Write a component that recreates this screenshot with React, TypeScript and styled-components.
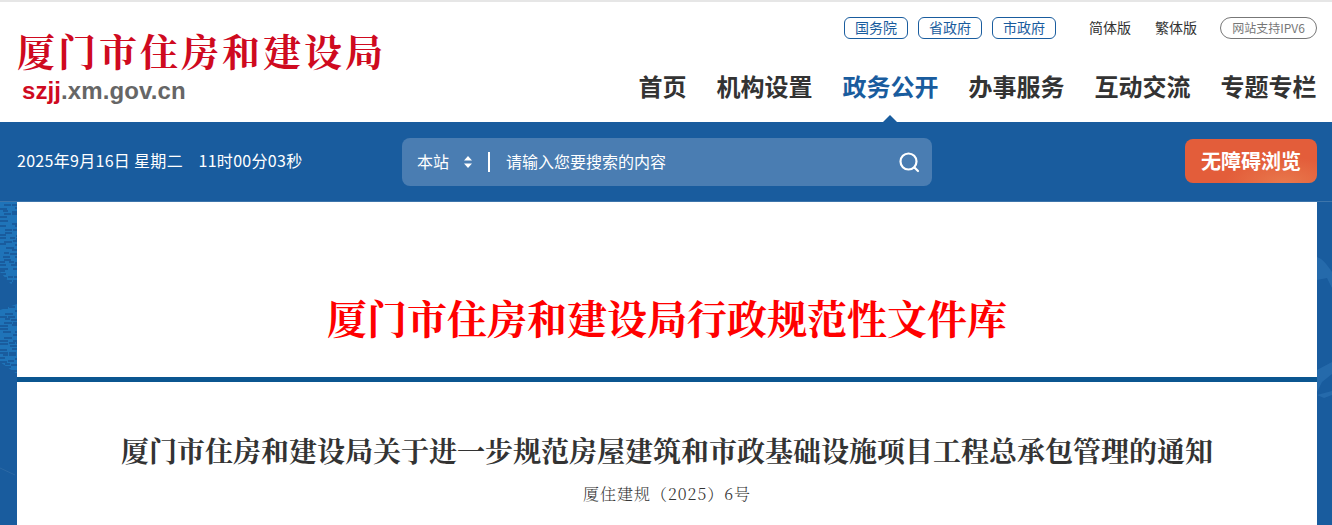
import React from 'react';
import styled, { createGlobalStyle } from 'styled-components';

const SANS = `"Noto Sans CJK SC", "Noto Sans", sans-serif`;
const SERIF = `"Noto Serif CJK SC", "Liberation Serif", "Noto Sans CJK SC", serif`;

const GlobalStyle = createGlobalStyle`
	html, body {
		margin: 0;
		padding: 0;
		height: 525px;
		overflow: hidden;
		background: #195c9e;
		font-family: ${SANS};
	}
	* { box-sizing: border-box; }
`;

const Page = styled.div`
	position: relative;
	width: 1332px;
	height: 525px;
	overflow: hidden;
	display: flex;
	flex-direction: column;
	background: #195c9e;
`;

const Header = styled.header`
	height: 122px;
	background: #fff;
	border-top: 2px solid #e6e6e6;
	padding: 0 15px 0 17px;
	display: flex;
	justify-content: space-between;
`;

const Logo = styled.div`
	padding-top: 26px;
`;

const LogoTitle = styled.div`
	font-family: ${SERIF};
	font-size: 38px;
	line-height: 44px;
	font-weight: 700;
	letter-spacing: 3px;
	color: #cf0a1f;
	white-space: nowrap;
`;

const LogoUrl = styled.div`
	margin: 5px 0 0 5px;
	font-family: "Liberation Sans", Arial, sans-serif;
	font-size: 24px;
	line-height: 28px;
	font-weight: 700;
	letter-spacing: 0.1px;
	color: #666;
	span { color: #cf0a1f; }
`;

const HeaderRight = styled.div`
	display: flex;
	flex-direction: column;
	align-items: flex-end;
`;

const TopLinks = styled.div`
	margin-top: 15px;
	height: 22px;
	display: flex;
	align-items: center;
`;

const GovLink = styled.a`
	width: 64px;
	height: 22px;
	margin-right: 10px;
	border: 1px solid #195c9e;
	border-radius: 6px;
	color: #195c9e;
	font-size: 14px;
	line-height: 18px;
	text-align: center;
`;

const VersionList = styled.div`
	margin: -2px 23px 0;
	display: flex;
	gap: 24px;
`;

const VersionLink = styled.a`
	color: #333;
	font-size: 14px;
	line-height: 22px;
`;

const Ipv6 = styled.div`
	width: 97px;
	height: 22px;
	border: 1px solid #777;
	border-radius: 11px;
	color: #777;
	font-size: 12px;
	line-height: 20px;
	text-align: center;
	white-space: nowrap;
`;

const Nav = styled.nav`
	margin: 29px 0.5px 0 0;
	display: flex;
	gap: 30px;
`;

const NavItem = styled.a<{ $active?: boolean }>`
	position: relative;
	height: 54px;
	color: ${p => (p.$active ? '#195c9e' : '#333')};
	font-size: 24px;
	line-height: 36px;
	font-weight: 700;
	white-space: nowrap;
	${p => p.$active && `
		&::after {
			content: '';
			position: absolute;
			left: 40.5px;
			bottom: 0;
			border-left: 7.5px solid transparent;
			border-right: 7.5px solid transparent;
			border-bottom: 7px solid #195c9e;
		}
	`}
`;

const Toolbar = styled.div`
	flex: none;
	height: 80px;
	background: #195c9e;
	border-bottom: 1px solid #3d75ab;
	padding: 0 15px 1px 17px;
	display: flex;
	align-items: center;
`;

const DateText = styled.div`
	width: 385px;
	color: #fff;
	font-size: 16px;
	line-height: 20px;
	letter-spacing: 0.3px;
	margin-top: -2px;
	white-space: pre;
`;

const SearchBox = styled.div`
	width: 530px;
	height: 48px;
	margin-top: 2px;
	border-radius: 8px;
	background: #4a7db2;
	padding: 0 12px 0 15px;
	display: flex;
	align-items: center;
	color: #fff;
	font-size: 16px;
`;

const Scope = styled.span`
	width: 46px;
	margin-top: -2px;
`;

const ScopeArrows = styled.svg`
	width: 10px;
	height: 14px;
`;

const Divider = styled.i`
	width: 2px;
	height: 20px;
	margin: 0 16px 0 15px;
	background: #fff;
`;

const Placeholder = styled.span`
	flex: 1;
	margin-top: -2px;
`;

const AccessButton = styled.a`
	width: 132px;
	height: 44px;
	margin-left: auto;
	margin-top: -1px;
	border-radius: 8px;
	background: radial-gradient(ellipse 45% 60% at 75% 100%, #e8784c 0%, #e35d3a 100%);
	color: #fff;
	font-size: 20px;
	line-height: 44px;
	font-weight: 700;
	text-align: center;
	white-space: nowrap;
`;

const Backdrop = styled.svg`
	position: absolute;
	left: 0;
	top: 202px;
	width: 1332px;
	height: 323px;
`;

const Content = styled.main`
	position: relative;
	flex: 1;
	width: 1300px;
	margin-left: 17px;
	background: #fff;
`;

const LibraryHead = styled.div`
	height: 175px;
	padding-top: 90px;
	text-align: center;
	color: #f00;
	font-family: ${SERIF};
	font-size: 40px;
	line-height: 50px;
	font-weight: 700;
`;

const Rule = styled.div`
	height: 5px;
	background: #0b5690;
`;

const DocTitle = styled.h1`
	margin: 0;
	padding-top: 48px;
	text-align: center;
	color: #333;
	font-family: ${SERIF};
	font-size: 28px;
	line-height: 40px;
	font-weight: 700;
	white-space: nowrap;
`;

const DocNumber = styled.div`
	margin-top: 12px;
	text-align: center;
	color: #333;
	font-family: ${SERIF};
	font-size: 16px;
	line-height: 24px;
	font-weight: 300;
	letter-spacing: 1px;
`;

// speckled flecks of the wave texture on the left edge
const flecks: number[][] = [];
for (let y = 1; y < 170; y += 3) {
	if (y > 84 && y < 103) continue;
	for (let x = 0; x < 17; ) {
		const h = Math.abs(Math.sin(x * 12.9898 + y * 78.233) * 43758.5453) % 1;
		const w = 2 + Math.floor(h * 7);
		if (h > 0.45) flecks.push([x, y + Math.round(h * 2), w]);
		x += w + 1;
	}
}

export default function App() {
	return (
		<Page>
			<GlobalStyle />
			<Backdrop viewBox="0 0 1332 323" aria-hidden="true">
				<path d="M0 0H17V78L11 82L0 70ZM0 108L17 102V172L0 160Z" fill="#1f74b9" />
				{flecks.map(([x, y, w], i) => (
					<rect key={i} x={x} y={y} width={w} height={2} fill="#195c9e" />
				))}
				<path d="M0 266L15 273" stroke="#3d75ab" strokeWidth="1" opacity="0.5" fill="none" />
				<g fill="#2a6fb0" opacity="0.75">
					<path d="M1317 55C1323 57 1328 64 1332 70V86L1327 76L1317 78Z" />
					<path d="M1317 168L1332 160V172L1322 180L1317 190Z" />
					<path d="M1317 193L1332 189V193L1324 196Z" />
				</g>
			</Backdrop>
			<Header>
				<Logo>
					<LogoTitle>厦门市住房和建设局</LogoTitle>
					<LogoUrl><span>szjj</span>.xm.gov.cn</LogoUrl>
				</Logo>
				<HeaderRight>
					<TopLinks>
						<GovLink>国务院</GovLink>
						<GovLink>省政府</GovLink>
						<GovLink>市政府</GovLink>
						<VersionList>
							<VersionLink>简体版</VersionLink>
							<VersionLink>繁体版</VersionLink>
						</VersionList>
						<Ipv6>网站支持IPV6</Ipv6>
					</TopLinks>
					<Nav>
						<NavItem>首页</NavItem>
						<NavItem>机构设置</NavItem>
						<NavItem $active>政务公开</NavItem>
						<NavItem>办事服务</NavItem>
						<NavItem>互动交流</NavItem>
						<NavItem>专题专栏</NavItem>
					</Nav>
				</HeaderRight>
			</Header>
			<Toolbar>
				<DateText>{'2025年9月16日 星期二    11时00分03秒'}</DateText>
				<SearchBox>
					<Scope>本站</Scope>
					<ScopeArrows viewBox="0 0 10 14">
						<path d="M5 1L9 5.5H1ZM5 13L1 8.5H9Z" fill="#fff" />
					</ScopeArrows>
					<Divider />
					<Placeholder>请输入您要搜索的内容</Placeholder>
					<svg width="22" height="22" viewBox="0 0 22 22" fill="none" stroke="#fff" strokeWidth="2.2">
						<circle cx="10.5" cy="10.5" r="8" />
						<path d="M16.5 16.5L20 20" strokeLinecap="round" />
					</svg>
				</SearchBox>
				<AccessButton>无障碍浏览</AccessButton>
			</Toolbar>
			<Content>
				<LibraryHead>厦门市住房和建设局行政规范性文件库</LibraryHead>
				<Rule />
				<DocTitle>厦门市住房和建设局关于进一步规范房屋建筑和市政基础设施项目工程总承包管理的通知</DocTitle>
				<DocNumber>厦住建规（2025）6号</DocNumber>
			</Content>
		</Page>
	);
}
